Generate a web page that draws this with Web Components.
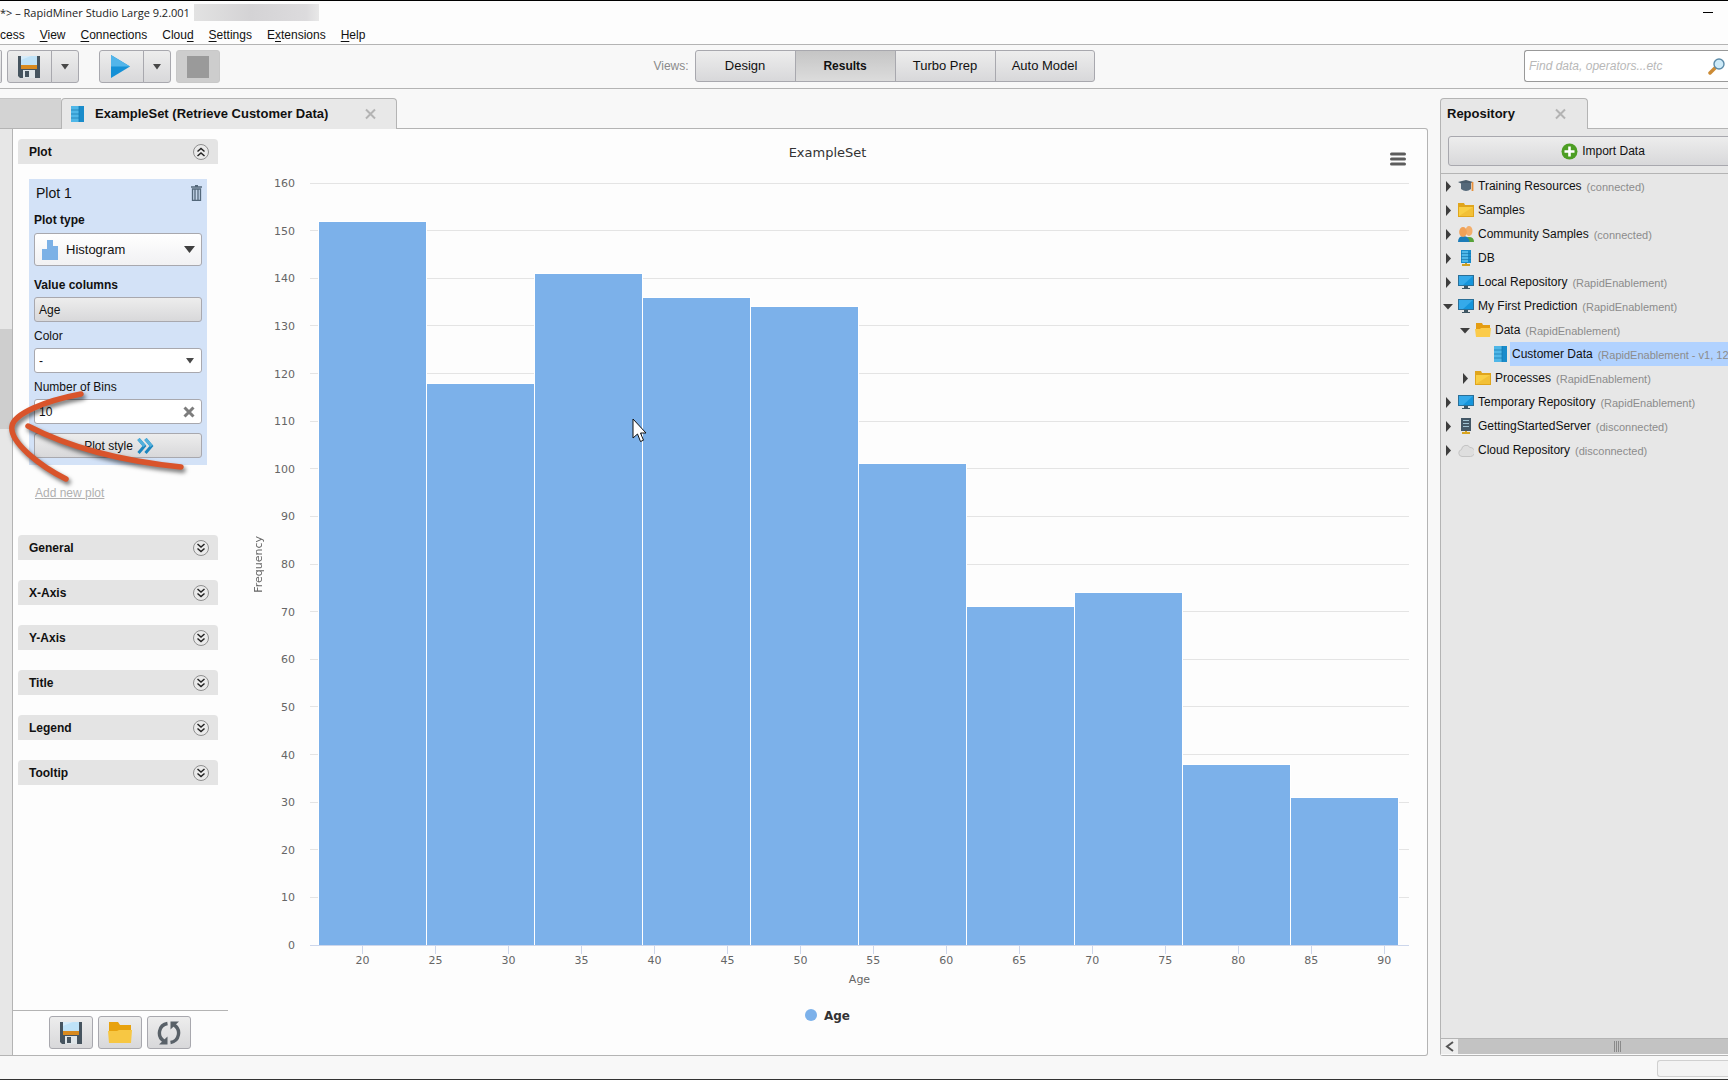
<!DOCTYPE html>
<html lang="en">
<head>
<meta charset="utf-8">
<title>RapidMiner Studio</title>
<style>
  html, body { margin: 0; height: 100%; overflow: hidden; }
  body { font: 12px/16px "Liberation Sans", Arial, sans-serif; color: #111; background: #f8f8f8; }
</style>
</head>
<body>
<rm-app></rm-app>
<script>
const ICONS = {
  save: [22, 22, '<path d="M0 0h22v22H2l-2-2z" fill="#46545f"/><path d="M3 0h16v10H3z" fill="#d6ecfa"/><path d="M3 4l10-4h6v9H3z" fill="#bfe2f7"/><path d="M3 9h16v4H3z" fill="#d98a1e"/><path d="M5 14h12v8H5z" fill="#dfe5e8"/><path d="M7 15h4v6H7z" fill="#46545f"/>'],
  play: [20, 23, '<path d="M0 0l19 11.500L0 23z" fill="#1590d6"/><path d="M0 0l19 11.500H0z" fill="#52b5ea"/>'],
  stop: [22, 22, '<path d="M0 0h22v22H0z" fill="#9a9a9a"/>'],
  down: [10, 6, '<path d="M1 0h8L5 5.500z" fill="#484848"/>'],
  bigdown: [11, 9, '<path d="M0 1h11L5.500 8z" fill="#404040"/>'],
  data: [13, 16, '<path d="M0 0h13v16H0z" fill="#1a8ccb"/><path d="M0 0h8v16H0z" fill="#4fb7e8"/><path d="M0 4h8M0 8h8M0 12h8M8 0v16" stroke="#1577ae" stroke-width=".7"/>'],
  close: [12, 12, '<path d="M2 1.500l9 9M11 1.500l-9 9" stroke="#b3b3b3" stroke-width="2"/>'],
  clear: [12, 12, '<path d="M1.500 1.500l9 9M10.500 1.500l-9 9" stroke="#7d7d7d" stroke-width="3"/>'],
  search: [17, 17, '<path d="M8 9l-6 6" stroke="#cc8b35" stroke-width="3.500" stroke-linecap="round"/><circle cx="11" cy="6" r="5" fill="#cdeaf8" stroke="#5c8ba8" stroke-width="1.400"/>'],
  plus: [17, 17, '<circle cx="8.500" cy="8.500" r="8" fill="#4d9e24"/><path d="M8.500 3.500v10M3.500 8.500h10" stroke="#fff" stroke-width="2.600"/>'],
  expand: [18, 18, '<circle cx="9" cy="9" r="7.500" fill="#eaeaea" stroke="#8f8f8f"/><path d="M5.500 5l3.500 3 3.500-3M5.500 9.500l3.500 3 3.500-3" fill="none" stroke="#222" stroke-width="1.500"/>'],
  collapse: [18, 18, '<circle cx="9" cy="9" r="7.500" fill="#eaeaea" stroke="#8f8f8f"/><path d="M5.500 8.500l3.500-3 3.500 3M5.500 13l3.500-3 3.500 3" fill="none" stroke="#222" stroke-width="1.500"/>'],
  trash: [11, 16, '<path d="M0 2h11M4 .500h3" stroke="#53677a" stroke-width="1.300"/><path d="M1.500 4v11.500h8V4zM4 4v11M7 4v11" fill="#c5d6ea" stroke="#53677a" stroke-width="1.300"/>'],
  histo: [16, 20, '<path d="M0 9h5V0h6v6h5v14H0z" fill="#7cb1e6"/>'],
  next: [17, 16, '<path d="M1.500 1l6 7-6 7M8.500 1l6 7-6 7" fill="none" stroke="#1c86bf" stroke-width="3"/><path d="M1.500 1l6 7M8.500 1l6 7" fill="none" stroke="#52b0dc" stroke-width="3"/>'],
  folder: [16, 14, '<path d="M0 0h6l1 2h9v12H0z" fill="#e0a51c"/><path d="M1 4h14v9H1z" fill="#f9cf45"/><path d="M1 13L15 4v9z" fill="#f2c037"/>'],
  folderopen: [16, 14, '<path d="M1 0h6l1 2h7v11H1z" fill="#e59d12"/><path d="M0 6h5l1-1h10l-1 9H1z" fill="#fbcb4a"/>'],
  bigfolder: [24, 21, '<path d="M1 0h9l2 3h11v17H1z" fill="#e8a20e"/><path d="M0 9h9l2-1h13l-1 13H1z" fill="#f7c743"/>'],
  refresh: [24, 24, '<path d="M10.500 2.500A9.500 9.500 0 0 0 7 20M13.500 21.500A9.500 9.500 0 0 0 17 4" fill="none" stroke="#596168" stroke-width="3.400"/><path d="M10.500 23.500H2l8.500-8zM13.500.500H22l-8.500 8z" fill="#596168"/>'],
  cap: [16, 13, '<path d="M0 2l8-2 7 2-7 4z" fill="#4a5c6b"/><path d="M3 3h10v6q-5 4-10 0z" fill="#55697a"/><path d="M14.500 2v9" stroke="#e8903a" stroke-width="1.800"/>'],
  people: [16, 16, '<path d="M6 16q0-5 5-5t5 5z" fill="#58a33a"/><ellipse cx="11" cy="5" rx="3.500" ry="5" fill="#f3ae6a"/><path d="M0 16q0-6 5.500-6t6 6z" fill="#1d7cb8"/><ellipse cx="5" cy="6" rx="3.800" ry="5" fill="#f0a157"/>'],
  db: [12, 16, '<path d="M1 0h10v13H1z" fill="#1a8ccb"/><path d="M2 1h6v11H2z" fill="#4fb7e8"/><path d="M1 3.500h10M1 6.500h10M1 9.500h10" stroke="#1577ae" stroke-width=".7"/><path d="M6 13v2M2 15h8" stroke="#cfa021" stroke-width="2"/>'],
  server: [12, 16, '<path d="M1 0h10v13H1z" fill="#435766"/><path d="M3 2.500h6M3 5.500h6M3 8.500h6" stroke="#9fc1d1"/><path d="M6 13v2M2 15h8" stroke="#d9a520" stroke-width="2"/>'],
  monitor: [16, 14, '<path d="M0 0h16v11H0z" fill="#2b6f97"/><path d="M1 1h14v9H1z" fill="#1595dc"/><path d="M1 1h14L5 10H1z" fill="#35aaea"/><path d="M6 11h4v2h2v1H4v-1h2z" fill="#3f5663"/>'],
  cloud: [16, 13, '<path d="M4 12.500a3.500 3.500 0 0 1-.500-6.900A4.600 4.600 0 0 1 12 3.500a4.500 4.500 0 0 1 .500 9z" fill="#dedede" stroke="#c4c4c4"/>'],
  right: [10, 11, '<path d="M3 0l5 5.500L3 11z" fill="#3d3d3d"/>'],
  open: [10, 11, '<path d="M0 3h10L5 8.500z" fill="#3d3d3d"/>'],
  menu: [16, 14, '<path d="M1.500 2h13M1.500 7h13M1.500 12h13" stroke="#5c5c5c" stroke-width="3" stroke-linecap="round"/>'],
  left: [9, 11, '<path d="M8 1L2 5.500 8 10" fill="none" stroke="#555" stroke-width="2"/>'],
  cursor: [15, 25, '<path d="M1 1v19l4.500-4 3 7.500 3-1.300-3-7.200H14z" fill="#fff" stroke="#111"/>']
};
const icon = n => { const [w, h, b] = ICONS[n]; return `<svg width="${w}" height="${h}" viewBox="0 0 ${w} ${h}" aria-hidden="true">${b}</svg>`; };
const BASE = `*{box-sizing:border-box} svg{display:block;flex:none} button,input,select{font:inherit;color:inherit;margin:0;padding:0;border:1px solid #a8a8ae;border-radius:3px;outline:0;appearance:none;background:linear-gradient(#ededed,#d8d8da)} button{display:flex;align-items:center;justify-content:center;flex:none}`;
const define = (tag, make) => customElements.define(tag, class extends HTMLElement {
  constructor() { super(); this.attachShadow({ mode: 'open' }); }
  connectedCallback() { const [css, html] = make(this); this.shadowRoot.innerHTML = `<style>${BASE}${css}</style>${html}`; }
});

define('rm-titlebar', () => [`
  :host{display:block;height:45px;border-top:1px solid #000;border-bottom:1px solid #b4b4b4;background:#fdfdfd;white-space:nowrap}
  .title{display:flex;align-items:center;gap:4px;height:23px;font:11px/22px "Open Sans",sans-serif;color:#222}
  .mask{width:125px;height:17px;background:linear-gradient(90deg,#e2e2e2,#d4d3d5 45%,#dcdbdd 90%,#e8e8e8)}
  .min{margin-left:auto;margin-right:15px;width:10px;height:1px;padding:0;border:0;border-radius:0;background:#000}
  nav{display:flex;gap:15px;height:20px;align-items:center;padding-top:1px}
  a{color:inherit;text-decoration:none} u{text-underline-offset:2px}`,
  `<div class="title"><span>*&gt; – RapidMiner Studio Large 9.2.001</span><span class="mask"></span><button class="min" aria-label="Minimize"></button></div>
  <nav><a href="#">cess</a><a href="#"><u>V</u>iew</a><a href="#"><u>C</u>onnections</a><a href="#">Clou<u>d</u></a><a href="#"><u>S</u>ettings</a><a href="#">E<u>x</u>tensions</a><a href="#"><u>H</u>elp</a></nav>`]);

define('rm-toolbar', () => [`
  :host{display:grid;grid-template-columns:1fr auto 1fr;height:44px;padding-top:5px;align-items:start;border-bottom:1px solid #b4b4b4;background:#f8f8f8;overflow:hidden}
  .tools{display:flex;height:33px}
  .tools button{height:33px;width:45px}
  .tools .edge{width:2px;border-left:0;border-radius:0 3px 3px 0;margin-right:5px}
  .tools .m{border-radius:3px 0 0 3px;padding-right:2px}
  .tools .d{width:28px;margin-left:-1px;border-radius:0 3px 3px 0;margin-right:20px}
  .tools .p{margin-right:5px}
  .tools .stop{width:44px;background:#cdcdcd;border-color:#c8c8c8}
  .views{display:flex;align-items:center;margin-left:20px;color:#8a8a8a}
  .views span{padding-right:6px}
  .views button{width:101px;height:32px;margin-left:-1px;border-radius:0;color:#111;font-size:13px}
  .views button:nth-of-type(1){border-radius:3px 0 0 3px;margin-left:0}
  .views button:last-child{border-radius:0 3px 3px 0;width:100px}
  .views .on{font-weight:bold;font-size:12px;background:linear-gradient(#c5c5c5,#dcdcdc)}
  .find{justify-self:end;display:flex;align-items:center;width:204px;height:32px;border:1px solid #999;border-right:0;border-radius:3px 0 0 3px;background:#fff}
  input{flex:1;min-width:0;border:0;background:none;padding-left:4px;font-style:italic}
  input::placeholder{color:#b8b8b8;opacity:1}
  .find svg{margin-right:3px}`,
  `<div class="tools"><button class="edge" aria-label="Open"></button><button class="m" aria-label="Save">${icon('save')}</button><button class="d" aria-label="Save options">${icon('down')}</button><button class="m" aria-label="Run">${icon('play')}</button><button class="d p" aria-label="Run options">${icon('down')}</button><button class="stop" aria-label="Stop">${icon('stop')}</button></div>
  <div class="views"><span>Views:</span><button>Design</button><button class="on">Results</button><button>Turbo Prep</button><button>Auto Model</button></div>
  <label class="find"><input type="text" placeholder="Find data, operators...etc" aria-label="Find">${icon('search')}</label>`]);

define('rm-section', el => {
  const open = el.hasAttribute('open');
  return [`:host{display:block}
  .head{width:100%;height:25px;padding:0 8px 0 11px;border:0;border-radius:4px 4px 0 0;background:#e4e4e4;font-weight:bold;justify-content:space-between}`,
  `<button class="head" aria-expanded="${open}"><span>${el.getAttribute('label')}</span>${icon(open ? 'collapse' : 'expand')}</button><slot></slot>`];
});

define('rm-plot', () => [`
  :host{display:flex;flex-direction:column;margin:15px 11px 0;width:178px;height:286px;padding:0 5px;background:#d3e2f7}
  .title{display:flex;align-items:center;justify-content:space-between;height:28px;padding:0 0 0 2px;font-size:14px}
  .title button{border:0;background:none}
  .row{display:flex;align-items:center;height:26px;line-height:16px}
  .v{height:31px;padding-top:6px}
  .b{font-weight:bold}
  .c{padding-top:2px}
  .box{display:flex;align-items:center;height:25px;border:1px solid #a8a8ae;border-radius:3px;background:#fff}
  .box select,.box input{flex:1;min-width:0;align-self:stretch;border:0;background:none;padding-left:4px}
  .box>svg{margin-right:6px;pointer-events:none}
  .type{height:33px;background:linear-gradient(#fff,#f1f1f3)}
  .type>svg:first-child{margin-left:7px;margin-right:4px}
  .type select{font-size:13px}
  .box button{border:0;background:none;margin-right:6px}
  .age{height:25px;justify-content:flex-start;padding-left:4px}
  .style{height:25px;gap:4px;margin-top:9px;padding-left:2px}`,
  `<div class="title">Plot 1<button aria-label="Delete plot">${icon('trash')}</button></div>
  <label class="row b" for="t">Plot type</label>
  <div class="box type">${icon('histo')}<select id="t"><option>Histogram</option></select>${icon('bigdown')}</div>
  <div class="row b v">Value columns</div>
  <button class="age">Age</button>
  <label class="row c" for="c">Color</label>
  <div class="box"><select id="c"><option>-</option></select>${icon('down')}</div>
  <label class="row c" for="n">Number of Bins</label>
  <div class="box"><input id="n" type="text" value="10"><button aria-label="Clear">${icon('clear')}</button></div>
  <button class="style">Plot style ${icon('next')}</button>`]);

define('rm-config', () => [`
  :host{display:flex;width:215px;flex:none;flex-direction:column}
  .list{flex:1;display:flex;flex-direction:column;gap:20px;padding:10px 10px 0 5px}
  .add{display:block;margin:20px 0 14px 17px;color:#b0b0b0}
  .first{height:376px}
  .foot{display:flex;gap:5px;height:45px;border-top:1px solid #b4b4b4;padding:5px 0 0 36px}
  .foot button{width:44px;height:33px}`,
  `<div class="list"><rm-section class="first" label="Plot" open><rm-plot></rm-plot><a class="add" href="#">Add new plot</a></rm-section>
  ${['General', 'X-Axis', 'Y-Axis', 'Title', 'Legend', 'Tooltip'].map(l => `<rm-section label="${l}"></rm-section>`).join('')}</div>
  <div class="foot"><button aria-label="Save">${icon('save')}</button><button aria-label="Open">${icon('bigfolder')}</button><button aria-label="Reset">${icon('refresh')}</button></div>`]);

define('rm-histogram', () => {
  const values = [152, 118, 141, 136, 134, 101, 71, 74, 38, 31];
  const lo = 16.4, hi = 91.7, px = v => ((v - lo) / (hi - lo) * 100).toFixed(3) + '%', py = v => (100 - v / 1.6).toFixed(3) + '%';
  let s = '';
  for (let v = 0; v <= 160; v += 10) s += `<line x1="0" x2="100%" y1="${py(v)}" y2="${py(v)}" stroke="${v ? '#e4e4e4' : '#ccd6eb'}"/><text x="-15" y="${py(v)}" dy="4" text-anchor="end">${v}</text>`;
  values.forEach((v, i) => { s += `<rect x="${px(17 + i * 7.4)}" y="${py(v)}" width="${(7.4 / (hi - lo) * 100).toFixed(3)}%" height="${v / 1.6}%" fill="#7cb1ea" stroke="#fff"/>`; });
  s += '<line x1="0" x2="100%" y1="100%" y2="100%" stroke="#ccd6eb"/>';
  for (let v = 20; v <= 90; v += 5) s += `<svg x="${px(v)}" y="100%" overflow="visible"><line y2="9" stroke="#ccd6eb"/><text y="19" text-anchor="middle">${v}</text></svg>`;
  return [`
  :host{display:flex;flex:1;min-width:0;flex-direction:column;font-family:"DejaVu Sans",sans-serif;color:#333}
  header{display:grid;grid-template-columns:1fr auto 1fr;height:54px;padding:14px 21px 0;font-size:13px;line-height:20px}
  header button{grid-column:3;justify-self:end;border:0;background:none;height:31px}
  header span{grid-column:2}
  .mid{flex:1;display:flex;min-height:0;padding-right:18px}
  .yt{width:82px;display:flex;align-items:center;padding-left:23px;font-size:11px;color:#666}
  .yt span{writing-mode:vertical-rl;transform:rotate(180deg)}
  .plot{flex:1;height:100%;overflow:visible;shape-rendering:crispEdges;font-size:11px;fill:#666}
  .xt{padding:27px 18px 0 82px;text-align:center;font-size:11px;color:#666}
  footer{display:flex;justify-content:center;align-items:flex-start;gap:7px;padding-top:20px;height:67px;font-weight:bold;font-size:12px}
  footer i{width:12px;height:12px;margin-top:1px;border-radius:6px;background:#7cb1ea}`,
  `<header><span>ExampleSet</span><button aria-label="Chart menu">${icon('menu')}</button></header>
  <div class="mid"><div class="yt"><span>Frequency</span></div><svg class="plot" role="img" aria-label="Histogram of Age">${s}</svg></div>
  <div class="xt">Age</div><footer><i></i><span>Age</span></footer>`];
});

define('rm-results', () => [`
  :host{display:flex;flex:1;min-width:0;flex-direction:column}
  .tabs{display:flex;height:31px;margin-bottom:-1px;z-index:1;font-weight:bold;font-size:13px}
  .tabs span{width:61px;height:30px;background:#d3d3d3;border-top:1px solid #c4c4c4}
  .tab{display:flex;align-items:center;width:336px;padding:0 15px 1px 9px;border:1px solid #b4b4b4;border-bottom:0;border-radius:4px 4px 0 0;background:#e8e8e8}
  .tab svg{margin-right:11px}
  .tab button{margin-left:auto;border:0;background:none}
  .tab button svg{margin-right:5px}
  .panel{flex:1;display:flex;min-height:0;border:1px solid #b4b4b4;border-left:0;border-radius:0 3px 3px 0;background:#fdfdfd}
  .strip{width:13px;flex:none;background:#e7e7e7;border-right:1px solid #b4b4b4;padding-top:200px}
  .strip div{height:100px;background:#cecece}`,
  `<div class="tabs"><span></span><div class="tab">${icon('data')}ExampleSet (Retrieve Customer Data)<button aria-label="Close tab">${icon('close')}</button></div></div>
  <div class="panel"><div class="strip"><div></div></div><rm-config></rm-config><rm-histogram></rm-histogram></div>`]);

define('rm-node', el => {
  const a = n => el.getAttribute(n) || '';
  return [`:host{display:flex;align-items:center;height:24px;padding-left:${2 + 17 * +(a('level') || 0)}px;white-space:nowrap}
  .tw{width:10px;margin-right:4px;flex:none}
  .ic{width:18px;display:flex;justify-content:center;flex:none;margin-right:1px}
  .t{display:flex;flex:1;align-items:center;gap:5px;height:24px;padding-left:2px}
  :host([selected]) .t{background:#b1d2ff}
  small{font-size:11px;color:#8c8c8c;padding-top:1px}`,
  `<span class="tw">${a('state') ? icon(a('state')) : ''}</span><span class="ic">${icon(a('icon'))}</span><span class="t"><span>${a('label')}</span>${a('note') ? `<small>(${a('note')}</small>` : ''}</span>`];
});

define('rm-repository', () => {
  const rows = [['cap', 'Training Resources', 'connected)'], ['folder', 'Samples', ''], ['people', 'Community Samples', 'connected)'], ['db', 'DB', ''],
    ['monitor', 'Local Repository', 'RapidEnablement)'], ['monitor', 'My First Prediction', 'RapidEnablement)', 0, 'open'], ['folderopen', 'Data', 'RapidEnablement)', 1, 'open'],
    ['data', 'Customer Data', 'RapidEnablement - v1, 12', 2, ''], ['folder', 'Processes', 'RapidEnablement)', 1], ['monitor', 'Temporary Repository', 'RapidEnablement)'],
    ['server', 'GettingStartedServer', 'disconnected)'], ['cloud', 'Cloud Repository', 'disconnected)']];
  return [`
  :host{display:flex;flex-direction:column;width:288px;flex:none;overflow:hidden}
  .tab{display:flex;align-items:center;justify-content:space-between;width:148px;height:31px;margin-bottom:-1px;z-index:1;padding:0 21px 1px 6px;border:1px solid #b4b4b4;border-bottom:0;border-radius:4px 4px 0 0;background:#e7e7e7;font-weight:bold;font-size:13px}
  .tab button{border:0;background:none}
  .panel{flex:1;display:flex;flex-direction:column;border:1px solid #b4b4b4;border-right:0;border-radius:0 0 0 3px;background:#e7e7e7}
  .imp{padding:7px 0 7px 7px;border-bottom:1px solid #b4b4b4}
  .imp button{width:310px;height:30px;gap:4px}
  .tree{flex:1}
  .bar{display:flex;height:17px;border-top:1px solid #b4b4b4;background:#fafafa}
  .bar button{width:17px;height:15px;border:0;border-radius:0;background:#eee}
  .thumb{flex:1;height:15px;display:flex;align-items:center;padding-left:156px;background:#c3c3c3}
  .thumb i{width:8px;height:11px;background:repeating-linear-gradient(90deg,#8a8a8a 0 1px,#c3c3c3 1px 2px)}`,
  `<div class="tab">Repository<button aria-label="Close">${icon('close')}</button></div>
  <div class="panel"><div class="imp"><button>${icon('plus')}Import Data</button></div>
  <div class="tree">${rows.map(r => `<rm-node icon="${r[0]}" label="${r[1]}" note="${r[2]}" level="${r[3] || 0}" state="${r[4] ?? 'right'}" ${r[3] === 2 ? 'selected' : ''}></rm-node>`).join('')}</div>
  <div class="bar"><button aria-label="Scroll left">${icon('left')}</button><div class="thumb"><i></i></div></div></div>`];
});

define('rm-annotation', () => [`
  :host{position:absolute;left:0;top:385px;width:200px;height:110px;pointer-events:none}
  .cur{position:absolute;left:632px;top:33px}
  .ink{filter:drop-shadow(2px 3px 2px rgba(0,0,0,.55))}`,
  `<svg class="ink" width="200" height="110" viewBox="0 0 200 110"><g fill="none" stroke="#d9542b" stroke-linecap="round" stroke-linejoin="round"><path d="M81 9C44 16 14 29 12 41C9 57 40 81 66 94" stroke-width="5.500"/><path d="M28 41C72 64 122 76 181 82" stroke-width="5.500"/></g></svg><span class="cur">${icon('cursor')}</span>`]);

define('rm-app', () => [`
  :host{display:flex;flex-direction:column;height:100vh;position:relative}
  .work{flex:1;display:flex;gap:12px;min-height:0;padding-top:9px}
  footer{display:flex;justify-content:flex-end;height:24px;padding-top:4px;border-bottom:1px solid #333}
  footer div{width:71px;height:17px;border:1px solid #d0d0d0;border-right:0;border-radius:3px 0 0 3px;background:#f3f3f3}`,
  `<rm-titlebar></rm-titlebar><rm-toolbar></rm-toolbar><div class="work"><rm-results></rm-results><rm-repository></rm-repository></div><footer><div></div></footer><rm-annotation></rm-annotation>`]);
</script>
</body>
</html>
